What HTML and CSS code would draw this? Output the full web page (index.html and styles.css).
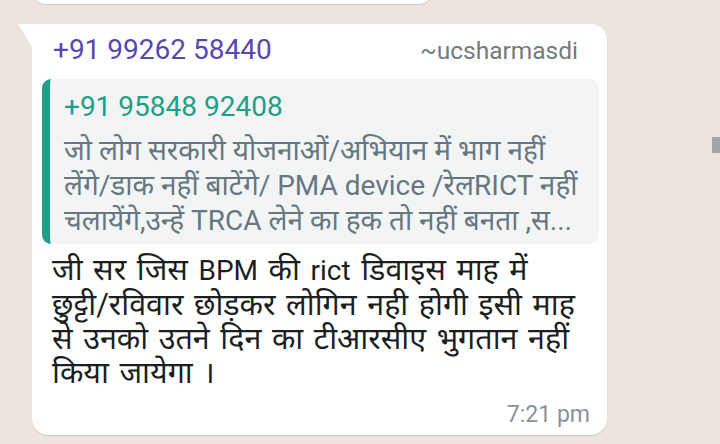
FILE: index.html
```html
<!DOCTYPE html>
<html><head>
<title>Chat</title>
<link rel="stylesheet" href="styles.css">
<meta charset="UTF-8">
</head><body>
<div class="chat">

<div class="bubble prev"></div>

<div class="bubble msg">
  <div class="head">
    <span class="sender">+91 99262 58440</span>
    <span class="alias">~ucsharmasdi</span>
  </div>

  <div class="quote">
    <div class="qname">+91 95848 92408</div>
    <div class="qtext">जो लोग सरकारी योजनाओं/अभियान में भाग नहीं<br>लेंगे/डाक नहीं बाटेंगे/ <span class="lat">PMA device</span> /रेल<span class="lat">RICT</span> नहीं<br>चलायेंगे,उन्हें <span class="lat">TRCA</span> लेने का हक तो नहीं बनता ,स...</div>
  </div>

  <p class="body">जी सर जिस <span class="lat">BPM</span> की <span class="lat">rict</span> डिवाइस माह में<br>छुट्टी/रविवार छोड़कर लोगिन नही होगी इसी माह<br>से उनको उतने दिन का टीआरसीए भुगतान नहीं<br>किया जायेगा ।</p>
  <div class="meta"><span class="time">7:21 pm</span></div>
</div>

<div class="scroll"></div>
</div>
</body></html>
```

FILE: styles.css
```css
body {
  margin: 0;
  background: #ece5dd;
  font-family: Roboto, "Noto Sans Devanagari", "Noto Sans", sans-serif;
}

.chat {
  position: relative;
  height: 444px;
  overflow: hidden;
}

.bubble {
  background: #fff;
  box-shadow: 0 1px 1px rgba(0,0,0,0.12);
}

.prev {
  width: 401px;
  height: 14px;
  margin: -10px 0 0 32px;
  border-radius: 0 0 14px 14px;
}

.msg {
  position: relative;
  width: 575px;
  box-sizing: border-box;
  margin: 20px 0 0 32px;
  padding: 10px 8px 0 10px;
  height: 411px;
  border-radius: 0 16px 16px 16px;
}
/* tail */
.msg:before {
  content: "";
  position: absolute;
  top: 0;
  left: -14px;
  border-top: 23px solid #fff;
  border-left: 14px solid transparent;
}

.head {
  display: flex;
  justify-content: space-between;
  align-items: baseline;
  padding: 0 21px 0 11px;
  line-height: 32px;
}
.sender { color: #5847b3; font-size: 28px; }
.alias  { color: #737b80; font-size: 24.5px; }

.quote {
  margin-top: 12px;
  background: #f3f4f4;
  border-left: 8px solid #1f9e88;
  border-radius: 9px;
  padding: 12px 10px 6px 14px;
}
.qname { color: #1f9e88; font-size: 28px; line-height: 32px; margin-bottom: 10px; }
.qtext { color: #667781; font-size: 28px; line-height: 35px; white-space: nowrap; }
.qtext .lat { font-size: 28px; }

.body {
  margin: 9px 0 0 10px;
  color: #1b1f22;
  font-size: 30.5px;
  word-spacing: 3px;
  line-height: 34px;
  white-space: nowrap;
}
.body .lat { font-size: 28px; }

.meta {
  display: flex;
  justify-content: flex-end;
  margin: 10px 9px 0 0;
}
.time { color: #8a9196; font-size: 23px; line-height: 30px; }

.scroll {
  position: absolute;
  right: 0;
  top: 137px;
  width: 8px;
  height: 16px;
  background: #a0a5a9;
}
```
